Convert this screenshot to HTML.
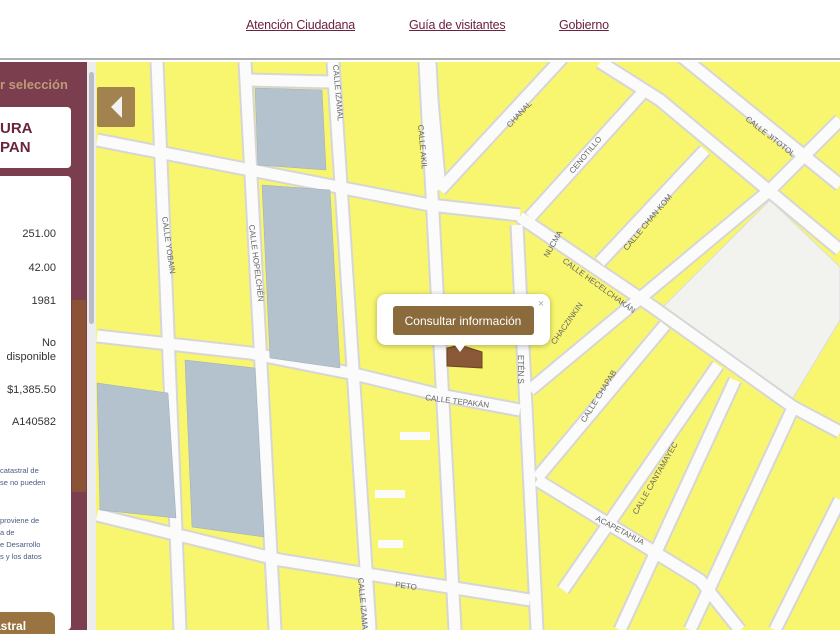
<!DOCTYPE html>
<html><head><meta charset="utf-8"><style>
*{margin:0;padding:0;box-sizing:border-box}
body{width:840px;height:630px;overflow:hidden;background:#fff;font-family:"Liberation Sans",sans-serif;position:relative}
.hdr{position:absolute;left:0;top:0;width:840px;height:60px;background:#fff;border-bottom:2px solid #b0b0b0}
.hdr a{position:absolute;top:18px;color:#6d2140;font-size:12.5px;text-decoration:underline;letter-spacing:-0.2px}
.side{position:absolute;left:0;top:62px;width:87px;height:568px;background:#7a3e4f}
.strip{position:absolute;left:72px;top:300px;width:14px;height:192px;background:#8b5236}
.scroll{position:absolute;left:87px;top:62px;width:9px;height:568px;background:#ededed}
.thumb{position:absolute;left:89px;top:72px;width:5px;height:252px;background:#b9bcc4;border-radius:3px}
.card{position:absolute;background:#fff;border-radius:0 4px 4px 0}
.small{position:absolute;left:0;font-size:7.5px;color:#4a5a80;line-height:12px;white-space:nowrap}
</style></head><body>
<div class="hdr">
<a style="left:246px">Atención Ciudadana</a>
<a style="left:409px">Guía de visitantes</a>
<a style="left:559px">Gobierno</a>
</div>
<div class="side"></div>
<div class="strip"></div>
<div style="position:absolute;left:0;top:77px;font-size:13px;font-weight:bold;color:#c09a78">r selección</div>
<div class="card" style="left:0;top:107px;width:71px;height:61px"></div>
<div style="position:absolute;left:0;top:119px;font-size:15px;font-weight:bold;color:#6a2440;line-height:19px">URA<br>PAN</div>
<div class="card" style="left:0;top:176px;width:71px;height:454px"></div>
<div style="position:absolute;left:0;top:176px;width:56px;height:300px;font-size:11px;color:#333;text-align:right">
<div style="position:absolute;right:0;top:52px">251.00</div>
<div style="position:absolute;right:0;top:86px">42.00</div>
<div style="position:absolute;right:0;top:119px">1981</div>
<div style="position:absolute;right:0;top:160px;line-height:14px">No<br>disponible</div>
<div style="position:absolute;right:0;top:208px">$1,385.50</div>
<div style="position:absolute;right:0;top:240px">A140582</div>
</div>
<div class="small" style="top:465px">catastral de<br>se no pueden</div>
<div class="small" style="top:515px">proviene de<br>a de<br>e Desarrollo<br>s y los datos</div>
<div style="position:absolute;left:0;top:612px;width:55px;height:22px;background:#9a7440;border-radius:0 6px 0 0;color:#fff;font-size:12px;font-weight:bold;padding-top:7px;overflow:hidden;white-space:nowrap;text-indent:-6px">astral</div>
<div class="scroll"></div><div class="thumb"></div>
<svg style="position:absolute;left:0;top:0" width="840" height="630" viewBox="0 0 840 630">
<defs><clipPath id="c"><rect x="96" y="62" width="744" height="568"/></clipPath></defs>
<g clip-path="url(#c)">
<rect x="96" y="62" width="744" height="568" fill="#f8f66e"/>
<polygon points="660,310 770,200 840,267 840,320 790,403" fill="#f2f2ee" stroke="#ddd"/>
<g fill="none" stroke="#d6d6d6" stroke-width="15">
<path d="M157,62 L180,630"/><path d="M245,62 L275,630"/><path d="M333,62 L370,630"/><path d="M425,62 L455,630"/><path d="M517,225 L537,630"/>
<path d="M97,140 L430,205 L520,215"/><path d="M97,336 L250,353 L350,373 L440,395 L520,410"/><path d="M97,515 L280,560 L530,600"/>
<path d="M250,80 L330,82"/>
<path d="M440,190 L565,55"/><path d="M530,217 L645,90"/><path d="M600,262 L705,150"/><path d="M530,390 L770,190 L840,120"/><path d="M537,478 L665,325"/>
<path d="M563,590 L718,365"/><path d="M620,630 L735,380"/><path d="M690,630 L792,410"/><path d="M775,630 L840,500"/>
<path d="M520,217 L653,307 L793,407 L840,432"/><path d="M537,480 L700,580 L740,630"/>
<path d="M600,62 L660,100 L840,250"/><path d="M680,55 L840,185"/><path d="M430,62 L432,100 L440,190"/>
</g>
<g fill="none" stroke="#fbfbfb" stroke-width="11">
<path d="M157,62 L180,630"/><path d="M245,62 L275,630"/><path d="M333,62 L370,630"/><path d="M425,62 L455,630"/><path d="M517,225 L537,630"/>
<path d="M97,140 L430,205 L520,215"/><path d="M97,336 L250,353 L350,373 L440,395 L520,410"/><path d="M97,515 L280,560 L530,600"/>
<path d="M250,80 L330,82"/>
<path d="M440,190 L565,55"/><path d="M530,217 L645,90"/><path d="M600,262 L705,150"/><path d="M530,390 L770,190 L840,120"/><path d="M537,478 L665,325"/>
<path d="M563,590 L718,365"/><path d="M620,630 L735,380"/><path d="M690,630 L792,410"/><path d="M775,630 L840,500"/>
<path d="M520,217 L653,307 L793,407 L840,432"/><path d="M537,480 L700,580 L740,630"/>
<path d="M600,62 L660,100 L840,250"/><path d="M680,55 L840,185"/><path d="M430,62 L432,100 L440,190"/>
</g>
<g fill="#b4c2ce" stroke="#9eadb9" stroke-width="0.5">
<polygon points="255,88 322,90 326,170 258,165"/>
<polygon points="262,185 330,190 340,368 270,358"/>
<polygon points="97,383 168,393 176,518 100,510"/>
<polygon points="185,360 255,368 264,537 192,527"/>
</g>
<rect x="400" y="432" width="30" height="8" fill="#fbfbfb"/>
<rect x="375" y="490" width="30" height="8" fill="#fbfbfb"/>
<rect x="378" y="540" width="25" height="8" fill="#fbfbfb"/>
<polygon points="447,348 460,345 482,352 482,368 447,366" fill="#8a5a38" stroke="#6b4420"/>
<g font-family="Liberation Sans" font-size="8" fill="#666">
<text transform="translate(162,217) rotate(82)">CALLE YOBAIN</text>
<text transform="translate(249,225) rotate(83)">CALLE HOPELCHÉN</text>
<text transform="translate(333,65) rotate(85)">CALLE IZAMAL</text>
<text transform="translate(418,125) rotate(85)">CALLE AKIL</text>
<text transform="translate(510,128) rotate(-47)">CHANAL</text>
<text transform="translate(573,174) rotate(-50)">CENOTILLO</text>
<text transform="translate(627,251) rotate(-50)">CALLE CHAN KOM</text>
<text transform="translate(562,262) rotate(36)">CALLE HECELCHAKÁN</text>
<text transform="translate(555,345) rotate(-55)">CHACZINKIN</text>
<text transform="translate(585,423) rotate(-58)">CALLE CHAPAB</text>
<text transform="translate(637,515) rotate(-60)">CALLE CANTAMAYEC</text>
<text transform="translate(745,120) rotate(38)">CALLE JITOTOL</text>
<text transform="translate(425,400) rotate(7)">CALLE TEPAKÁN</text>
<text transform="translate(595,520) rotate(28)">ACAPETAHUA</text>
<text transform="translate(395,587) rotate(8)">PETO</text>
<text transform="translate(518,355) rotate(90)">ETÉN S</text>
<text transform="translate(358,578) rotate(85)">CALLE IZAMAL</text>
<text transform="translate(548,258) rotate(-60)">NUCMA</text>
</g>
</g>
<rect x="97" y="87" width="38" height="40" rx="2" fill="#a2824f"/>
<polygon points="122,96 122,118 111,107" fill="#f2f2f2"/>
<rect x="377" y="294" width="173" height="51" rx="9" fill="#fff" style="filter:drop-shadow(0 1px 3px rgba(0,0,0,.3))"/>
<polygon points="454,344 466,344 460,352" fill="#fff"/>
<rect x="393" y="306" width="141" height="29" rx="3" fill="#8b6a3c"/>
<text x="463" y="325" text-anchor="middle" font-family="Liberation Sans" font-size="12" fill="#fff">Consultar información</text>
<text x="541" y="307" text-anchor="middle" font-family="Liberation Sans" font-size="11" fill="#aaa">×</text>
</svg>
</body></html>
